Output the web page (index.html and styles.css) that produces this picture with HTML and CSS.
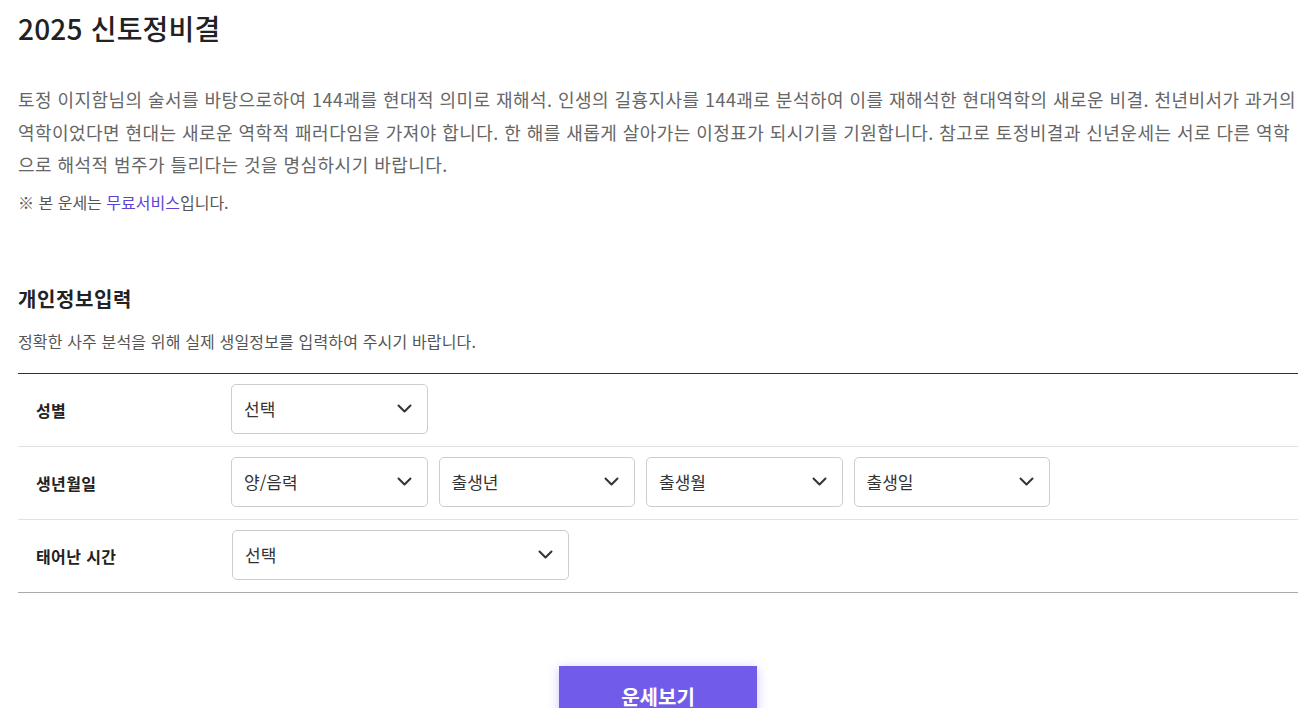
FILE: index.html
```html
<!DOCTYPE html>
<html lang="ko">
<head>
<meta charset="utf-8">
<title>2025 신토정비결</title>
<link rel="stylesheet" href="styles.css">
</head>
<body>
<div class="page">
  <h1 class="title">2025 신토정비결</h1>
  <p class="intro">토정 이지함님의 술서를 바탕으로하여 144괘를 현대적 의미로 재해석. 인생의 길흉지사를 144괘로 분석하여 이를 재해석한 현대역학의 새로운 비결. 천년비서가 과거의 역학이었다면 현대는 새로운 역학적 패러다임을 가져야 합니다. 한 해를 새롭게 살아가는 이정표가 되시기를 기원합니다. 참고로 토정비결과 신년운세는 서로 다른 역학으로 해석적 범주가 틀리다는 것을 명심하시기 바랍니다.</p>
  <p class="note">※ 본 운세는 <span class="free">무료서비스</span>입니다.</p>

  <h2 class="section-title">개인정보입력</h2>
  <p class="section-desc">정확한 사주 분석을 위해 실제 생일정보를 입력하여 주시기 바랍니다.</p>

  <div class="form-table">
    <div class="row">
      <div class="label">성별</div>
      <div class="fields">
        <div class="select"><span>선택</span><svg class="chev" width="15" height="9" viewBox="0 0 15 9"><polyline points="1.5,1.5 7.5,7.5 13.5,1.5" fill="none" stroke="#333" stroke-width="2" stroke-linecap="round" stroke-linejoin="round"/></svg></div>
      </div>
    </div>
    <div class="row">
      <div class="label">생년월일</div>
      <div class="fields">
        <div class="select"><span>양/음력</span><svg class="chev" width="15" height="9" viewBox="0 0 15 9"><polyline points="1.5,1.5 7.5,7.5 13.5,1.5" fill="none" stroke="#333" stroke-width="2" stroke-linecap="round" stroke-linejoin="round"/></svg></div>
        <div class="select"><span>출생년</span><svg class="chev" width="15" height="9" viewBox="0 0 15 9"><polyline points="1.5,1.5 7.5,7.5 13.5,1.5" fill="none" stroke="#333" stroke-width="2" stroke-linecap="round" stroke-linejoin="round"/></svg></div>
        <div class="select"><span>출생월</span><svg class="chev" width="15" height="9" viewBox="0 0 15 9"><polyline points="1.5,1.5 7.5,7.5 13.5,1.5" fill="none" stroke="#333" stroke-width="2" stroke-linecap="round" stroke-linejoin="round"/></svg></div>
        <div class="select"><span>출생일</span><svg class="chev" width="15" height="9" viewBox="0 0 15 9"><polyline points="1.5,1.5 7.5,7.5 13.5,1.5" fill="none" stroke="#333" stroke-width="2" stroke-linecap="round" stroke-linejoin="round"/></svg></div>
      </div>
    </div>
    <div class="row last">
      <div class="label">태어난 시간</div>
      <div class="fields">
        <div class="select wide"><span>선택</span><svg class="chev" width="15" height="9" viewBox="0 0 15 9"><polyline points="1.5,1.5 7.5,7.5 13.5,1.5" fill="none" stroke="#333" stroke-width="2" stroke-linecap="round" stroke-linejoin="round"/></svg></div>
      </div>
    </div>
  </div>

  <div class="actions">
    <button class="submit" type="button">운세보기</button>
  </div>
</div>
</body>
</html>
```

FILE: styles.css
```css
html, body {
  margin: 0;
  padding: 0;
  background: #fff;
}
body {
  font-family: "Noto Sans CJK KR", "Noto Sans", sans-serif;
  color: #222;
}
.page {
  width: 1280px;
  padding: 8px 0 0 18px;
}
.title {
  margin: 0;
  font-size: 28px;
  line-height: 40px;
  font-weight: 500;
  color: #222;
  letter-spacing: 0.2px;
}
.intro {
  margin: 35px -6px 0 0;
  font-size: 18px;
  line-height: 32.5px;
  color: #666;
  letter-spacing: 0.45px;
}
.note {
  margin: 10px 0 0;
  font-size: 16px;
  line-height: 22px;
  color: #555;
}
.free {
  color: #5b43d6;
}
.section-title {
  margin: 72px 0 0;
  font-size: 20px;
  line-height: 28px;
  font-weight: 700;
  color: #222;
  letter-spacing: 0.6px;
}
.section-desc {
  margin: 17px 0 0;
  font-size: 16px;
  line-height: 22px;
  color: #555;
  letter-spacing: 0.15px;
}
.form-table {
  margin-top: 21px;
  border-top: 1px solid #333;
}
.row {
  display: flex;
  align-items: center;
  height: 72px;
  border-bottom: 1px solid #e2e2e2;
}
.row.last {
  border-bottom-color: #aaa;
}
.label {
  width: 195px;
  padding-left: 18px;
  font-size: 16px;
  font-weight: 700;
  color: #222;
  letter-spacing: 0.4px;
}
.fields {
  display: flex;
  gap: 11px;
  margin-top: -2px;
}
.select {
  box-sizing: border-box;
  width: 196.5px;
  height: 50px;
  border: 1px solid #cdcdcd;
  border-radius: 5px;
  display: flex;
  align-items: center;
  justify-content: space-between;
  padding: 0 15px 0 12px;
  font-size: 17px;
  color: #333;
}
.select.wide {
  width: 337px;
  margin-left: 1px;
}
.chev {
  display: block;
}
.actions {
  display: flex;
  justify-content: center;
  margin-top: 73px;
}
.submit {
  width: 198px;
  height: 62px;
  border: 0;
  background: #715ce9;
  color: #fff;
  font-family: "Noto Sans CJK KR", "Noto Sans", sans-serif;
  font-size: 20px;
  font-weight: 700;
  box-shadow: 0 2px 10px rgba(113, 92, 233, 0.35);
}
```
